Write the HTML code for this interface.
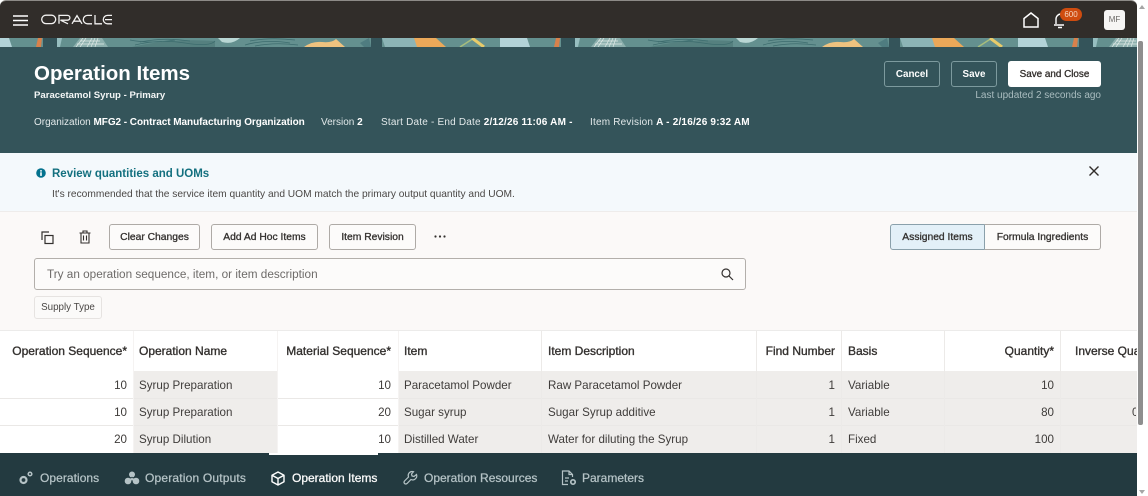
<!DOCTYPE html>
<html><head><meta charset="utf-8"><style>
html,body{margin:0;padding:0;width:1148px;height:496px;overflow:hidden;background:#fff}
body{position:relative;font-family:"Liberation Sans",sans-serif;color:#3a3836}
.a{position:absolute;white-space:nowrap}
.b{position:absolute;box-sizing:border-box}
.t{font-size:11.6px;line-height:16px;color:#3f3c3a;height:16px}
.h{font-size:12px;line-height:16px;color:#33302e;height:16px;font-weight:400;-webkit-text-stroke:.35px #33302e}
.r{text-align:right}
.btn{position:absolute;box-sizing:border-box;height:26px;border:1px solid #aeaaa6;border-radius:3px;background:#fcfbfa;font-size:10.3px;line-height:26px;text-align:center;color:#33302e;-webkit-text-stroke:.3px #33302e}
.tab{font-size:12px;line-height:16px;color:#b5c3c6;-webkit-text-stroke:.25px #b5c3c6}
.w{color:#fff;-webkit-text-stroke:.3px #f4f4f4}
.m{top:116px;font-size:10px;line-height:14px;color:#e2e9ea}
.m b{color:#fff}
svg{position:absolute;overflow:visible}
</style></head><body>

<div class="b" style="left:0;top:0;width:1137px;height:38px;background:#312d2a;border-radius:6px 6px 0 0;border-top:1px solid #8d8a87"></div>
<svg style="left:13px;top:15px" width="16" height="12"><path d="M0 1H15M0 5.500H15M0 10H15" stroke="#fff" stroke-width="1.600"/></svg>
<svg style="left:41px;top:14px" width="72" height="12" viewBox="0 0 72 12"><g fill="none" stroke="#f2f1f0" stroke-width="1.300"><rect x=".7" y="1.200" width="14" height="8.400" rx="4.200"/><path d="M18 9.800V1.400H26.500a2.400 2.400 0 0 1 0 4.800H19.500L27 9.800"/><path d="M31 9.800L36 1.600 41 9.800M33 7.200H39"/><path d="M51 1.400H46.500a4.200 4.200 0 0 0 0 8.400H51"/><path d="M54 1V9.800H61"/><path d="M71 1.400H66.500a4.200 4.200 0 0 0 0 8.400H71M64 5.600H71"/></g></svg>
<svg style="left:1023px;top:12px" width="17" height="16"><path d="M1 15V6.500L8 1l7 5.500V15Z" fill="none" stroke="#fff" stroke-width="1.500"/></svg>
<svg style="left:1053px;top:12px" width="16" height="16"><path d="M3 12V7a5 5 0 0 1 5-5M1 13H11M5 15.500H9" fill="none" stroke="#fff" stroke-width="1.400"/></svg>
<div class="a" style="left:1060px;top:8px;width:22px;height:13px;border-radius:7px;background:#cf4c0f;color:#f5d5c0;font-size:8px;line-height:13px;text-align:center">600</div>
<div class="a" style="left:1104px;top:10px;width:21px;height:20px;border-radius:3px;background:#f6f5f4;color:#6a6866;font-size:8px;line-height:20px;text-align:center">MF</div>

<div class="b" style="left:0;top:38px;width:1137px;height:115px;background:#34545a"></div>
<svg style="left:0;top:38px;overflow:hidden" width="1137" height="9">
<defs><g id="p">
<rect x="0" y="0" width="518" height="9" fill="#64908f"/>
<path d="M-18 0H9L12 9H-18Z" fill="#b3d3d8"/>
<path d="M36 9L38 0H42L41 9Z" fill="#d9814b"/>
<rect x="43" y="0" width="14" height="9" fill="#34545a"/>
<path d="M57 0H62L60 9H57Z" fill="#97bec0"/>
<path d="M73 9L80 0H102L108 9Z" fill="#8db0ae"/>
<path d="M132 9Q170 0 215 3V9Z" fill="#55807f"/>
<path d="M80 3H100M77 6H104M86 0L80 9M92 0L87 9M98 0L95 9M83 0L76 9M95 0L91 9" stroke="#dfe9e6" stroke-width=".7"/>
<path d="M135 7Q160 1 185 5T215 3M140 4Q165 -1 190 3M130 2Q150 6 175 2M245 7Q265 1 290 5M250 3Q270 -1 295 2M255 8Q275 4 298 7" stroke="#3d6c6e" stroke-width=".8" fill="none"/>
<path d="M218 0H240Q232 7 222 4Z" fill="#b9d6d4"/>
<path d="M304 9Q312 3 322 4T336 1L345 9Z" fill="#eec27f"/>
<path d="M360 5L369 0 371 9H364Z" fill="#4f7c80"/>
<rect x="371" y="0" width="11" height="9" fill="#34545a"/>
<path d="M382 0H414L418 9H385Z" fill="#8cb4b6"/>
<path d="M414 0H436L446 9H417Z" fill="#eba859"/>
<path d="M460 9L474 0" stroke="#a7bd7c" stroke-width="1.500"/>
<path d="M472 0L484 9" stroke="#e8cb6a" stroke-width="3"/>
<path d="M503 9L510 0H527L531 9Z" fill="#b8d8dd"/>
</g></defs>
<use href="#p" x="0"/><use href="#p" x="518"/><use href="#p" x="1036"/>
</svg>

<div class="a" style="left:34px;top:61px;font-size:20.500px;line-height:25px;font-weight:700;color:#fff">Operation Items</div>
<div class="a" style="left:34px;top:89px;font-size:9.600px;line-height:13px;font-weight:700;color:#f3f6f6">Paracetamol Syrup - Primary</div>
<div class="a m" style="left:34px">Organization <b style="letter-spacing:-.05px">MFG2 - Contract Manufacturing Organization</b></div>
<div class="a m" style="left:321px">Version <b>2</b></div>
<div class="a m" style="left:381px;letter-spacing:.2px">Start Date - End Date <b>2/12/26 11:06 AM -</b></div>
<div class="a m" style="left:590px;letter-spacing:.2px">Item Revision <b>A - 2/16/26 9:32 AM</b></div>

<div class="b" style="left:884px;top:61px;width:56px;height:26px;border:1px solid #7d9a9e;border-radius:3px;color:#fff;font-size:9.800px;font-weight:700;line-height:26px;text-align:center">Cancel</div>
<div class="b" style="left:951px;top:61px;width:46px;height:26px;border:1px solid #7d9a9e;border-radius:3px;color:#fff;font-size:9.800px;font-weight:700;line-height:26px;text-align:center">Save</div>
<div class="b" style="left:1008px;top:61px;width:93px;height:26px;background:#fff;border-radius:3px;color:#312d2a;font-size:9.900px;line-height:27px;text-align:center;-webkit-text-stroke:.3px #312d2a">Save and Close</div>
<div class="a r" style="right:47px;top:89px;font-size:10px;line-height:14px;color:#a9bcbf">Last updated 2 seconds ago</div>

<div class="b" style="left:0;top:153px;width:1137px;height:59px;background:#f4f9fc;border-bottom:1px solid #eeeceb"></div>
<svg style="left:36px;top:168px" width="10" height="10"><circle cx="5" cy="5" r="4.800" fill="#04728e"/><rect x="4.200" y="4.300" width="1.600" height="3.600" fill="#fff"/><rect x="4.200" y="2.100" width="1.600" height="1.500" fill="#fff"/></svg>
<div class="a" style="left:52px;top:167px;font-size:11.500px;line-height:15px;font-weight:700;color:#13707f">Review quantities and UOMs</div>
<div class="a" style="left:52px;top:188px;font-size:10.200px;line-height:13px;color:#4a4745">It's recommended that the service item quantity and UOM match the primary output quantity and UOM.</div>
<svg style="left:1089px;top:166px" width="10" height="10"><path d="M.5 .5L9.500 9.500M9.500 .5L.5 9.500" stroke="#312d2a" stroke-width="1.400"/></svg>

<div class="b" style="left:0;top:212px;width:1137px;height:119px;background:#fbf9f8;border-bottom:1px solid #ecebea"></div>
<svg style="left:41px;top:231px" width="13" height="13"><path d="M8 1H1V9" fill="none" stroke="#33302e" stroke-width="1.200"/><rect x="4" y="4.500" width="8" height="8" fill="none" stroke="#33302e" stroke-width="1.200"/></svg>
<svg style="left:79px;top:230px" width="12" height="14"><path d="M.5 3H11.500M4 3V1H8V3M2 3V13H10V3M4.500 5.500V10.500M7.500 5.500V10.500" fill="none" stroke="#33302e" stroke-width="1.100"/></svg>
<div class="btn" style="left:109px;top:224px;width:91px">Clear Changes</div>
<div class="btn" style="left:211px;top:224px;width:107px">Add Ad Hoc Items</div>
<div class="btn" style="left:329px;top:224px;width:87px">Item Revision</div>
<svg style="left:434px;top:235px" width="13" height="4"><circle cx="1.500" cy="1.500" r="1.100" fill="#33302e"/><circle cx="6" cy="1.500" r="1.100" fill="#33302e"/><circle cx="10.500" cy="1.500" r="1.100" fill="#33302e"/></svg>
<div class="btn" style="left:890px;top:224px;width:95px;background:#e3f0f8;border-radius:3px 0 0 3px;border-color:#8aa0ab">Assigned Items</div>
<div class="btn" style="left:984px;top:224px;width:117px;border-radius:0 3px 3px 0;border-left:1px solid #8aa0ab">Formula Ingredients</div>
<div class="b" style="left:34px;top:258px;width:712px;height:32px;border:1px solid #b3afab;border-radius:3px;background:#fcfbfa"></div>
<div class="a" style="left:47px;top:267px;font-size:11.750px;line-height:16px;color:#6e6b69">Try an operation sequence, item, or item description</div>
<svg style="left:721px;top:268px" width="13" height="13"><circle cx="5" cy="5" r="4" fill="none" stroke="#33302e" stroke-width="1.200"/><path d="M8 8L12 12" stroke="#33302e" stroke-width="1.200"/></svg>
<div class="b" style="left:34px;top:296px;width:68px;height:23px;border:1px solid #e6e3e1;border-radius:3px;background:#fbfaf9;font-size:9.800px;line-height:21px;text-align:center;color:#4a4745">Supply Type</div>

<!-- table -->
<div class="b" style="left:0;top:331px;width:1137px;height:40px;background:#fff"></div>
<div class="b" style="left:0;top:371px;width:1137px;height:82px;background:#efedeb"></div>
<div class="b" style="left:0;top:371px;width:133px;height:82px;background:#fff"></div>
<div class="b" style="left:277px;top:371px;width:121px;height:82px;background:#fff"></div>
<div class="b" style="left:0;top:398px;width:1137px;height:1px;background:#eae8e6"></div>
<div class="b" style="left:0;top:425px;width:1137px;height:1px;background:#eae8e6"></div>
<div class="b" style="left:133px;top:331px;width:1px;height:122px;background:#f5f3f2"></div>
<div class="b" style="left:277px;top:331px;width:1px;height:122px;background:#f5f3f2"></div>
<div class="b" style="left:398px;top:331px;width:1px;height:122px;background:#f5f3f2"></div>
<div class="b" style="left:541px;top:331px;width:1px;height:122px;background:#eceae8"></div>
<div class="b" style="left:756px;top:331px;width:1px;height:122px;background:#eceae8"></div>
<div class="b" style="left:841px;top:331px;width:1px;height:122px;background:#eceae8"></div>
<div class="b" style="left:944px;top:331px;width:1px;height:122px;background:#eceae8"></div>
<div class="b" style="left:1060px;top:331px;width:1px;height:122px;background:#eceae8"></div>

<div class="a h r" style="right:1021px;top:343px">Operation Sequence*</div>
<div class="a h" style="left:139px;top:343px">Operation Name</div>
<div class="a h r" style="right:757px;top:343px">Material Sequence*</div>
<div class="a h" style="left:404px;top:343px">Item</div>
<div class="a h" style="left:548px;top:343px">Item Description</div>
<div class="a h r" style="right:313px;top:343px">Find Number</div>
<div class="a h" style="left:848px;top:343px">Basis</div>
<div class="a h r" style="right:94px;top:343px">Quantity*</div>
<div class="a" style="left:1061px;top:331px;width:76px;height:40px;overflow:hidden"><div class="a h" style="left:14px;top:12px">Inverse Quantity</div></div>

<div class="a t r" style="right:1021px;top:378px">10</div><div class="a t" style="left:139px;top:378px">Syrup Preparation</div><div class="a t r" style="right:757px;top:378px">10</div><div class="a t" style="left:404px;top:378px">Paracetamol Powder</div><div class="a t" style="left:548px;top:378px">Raw Paracetamol Powder</div><div class="a t r" style="right:313px;top:378px">1</div><div class="a t" style="left:848px;top:378px">Variable</div><div class="a t r" style="right:94px;top:378px">10</div>
<div class="a t r" style="right:1021px;top:405px">10</div><div class="a t" style="left:139px;top:405px">Syrup Preparation</div><div class="a t r" style="right:757px;top:405px">20</div><div class="a t" style="left:404px;top:405px">Sugar syrup</div><div class="a t" style="left:548px;top:405px">Sugar Syrup additive</div><div class="a t r" style="right:313px;top:405px">1</div><div class="a t" style="left:848px;top:405px">Variable</div><div class="a t r" style="right:94px;top:405px">80</div>
<div class="a" style="left:1061px;top:399px;width:75px;height:26px;overflow:hidden"><div class="a t" style="left:71px;top:6px">0</div></div>
<div class="a t r" style="right:1021px;top:432px">20</div><div class="a t" style="left:139px;top:432px">Syrup Dilution</div><div class="a t r" style="right:757px;top:432px">10</div><div class="a t" style="left:404px;top:432px">Distilled Water</div><div class="a t" style="left:548px;top:432px">Water for diluting the Syrup</div><div class="a t r" style="right:313px;top:432px">1</div><div class="a t" style="left:848px;top:432px">Fixed</div><div class="a t r" style="right:94px;top:432px">100</div>

<!-- bottom -->
<div class="b" style="left:0;top:453px;width:1137px;height:43px;background:#233a40"></div>
<div class="b" style="left:269px;top:453px;width:109px;height:2px;background:#fff"></div>
<svg style="left:19px;top:471px" width="15" height="14"><circle cx="4.500" cy="9" r="3" fill="none" stroke="#b5c3c6" stroke-width="2.200"/><circle cx="11" cy="3" r="1.800" fill="none" stroke="#b5c3c6" stroke-width="1.500"/></svg>
<div class="a tab" style="left:40px;top:470px;letter-spacing:.05px">Operations</div>
<svg style="left:124px;top:471px" width="16" height="14"><g fill="#b5c3c6"><circle cx="8" cy="3.500" r="3"/><circle cx="4" cy="10" r="3.300"/><circle cx="12" cy="10" r="3.300"/><circle cx="8" cy="8" r="1.500"/></g><circle cx="8" cy="6.500" r=".8" fill="#233a40"/></svg>
<div class="a tab" style="left:145px;top:470px;letter-spacing:.18px">Operation Outputs</div>
<svg style="left:271px;top:471px" width="14" height="15"><path d="M7 1L13 4.200V10.800L7 14 1 10.800V4.200ZM1 4.200L7 7.500 13 4.200M7 7.500V14" fill="none" stroke="#fff" stroke-width="1.400" stroke-linejoin="round"/></svg>
<div class="a tab w" style="left:292px;top:470px">Operation Items</div>
<svg style="left:403px;top:470px" width="15" height="16"><path d="M9 1.500a4 4 0 0 0-3.500 5.500L1.500 11a2 2 0 0 0 0 2.500 2 2 0 0 0 2.500 0L8 9.500a4 4 0 0 0 5.500-5L11 6.500 9 6 8.500 4l2-2.300A4 4 0 0 0 9 1.500Z" fill="none" stroke="#b5c3c6" stroke-width="1.200"/></svg>
<div class="a tab" style="left:424px;top:470px">Operation Resources</div>
<svg style="left:561px;top:470px" width="16" height="16"><path d="M7 14.500H1.500V1H8L11.500 4.500V7M8 1V4.500H11.500M4 8H8M4 11H7" fill="none" stroke="#b5c3c6" stroke-width="1.200"/><circle cx="12" cy="12" r="2.200" fill="none" stroke="#b5c3c6" stroke-width="1.700"/></svg>
<div class="a tab" style="left:582px;top:470px">Parameters</div>

<!-- scrollbar -->
<div class="b" style="left:1137px;top:0;width:11px;height:496px;background:#fff"></div>
<div class="b" style="left:1138px;top:41px;width:5px;height:384px;background:#8e8e8e;border-radius:2px"></div>
<svg style="left:1139px;top:5px" width="6" height="4"><path d="M0 4L3 0 6 4Z" fill="#a5a5a5"/></svg>
<svg style="left:1139px;top:490px" width="6" height="4"><path d="M0 0L3 4 6 0Z" fill="#a5a5a5"/></svg>
</body></html>
